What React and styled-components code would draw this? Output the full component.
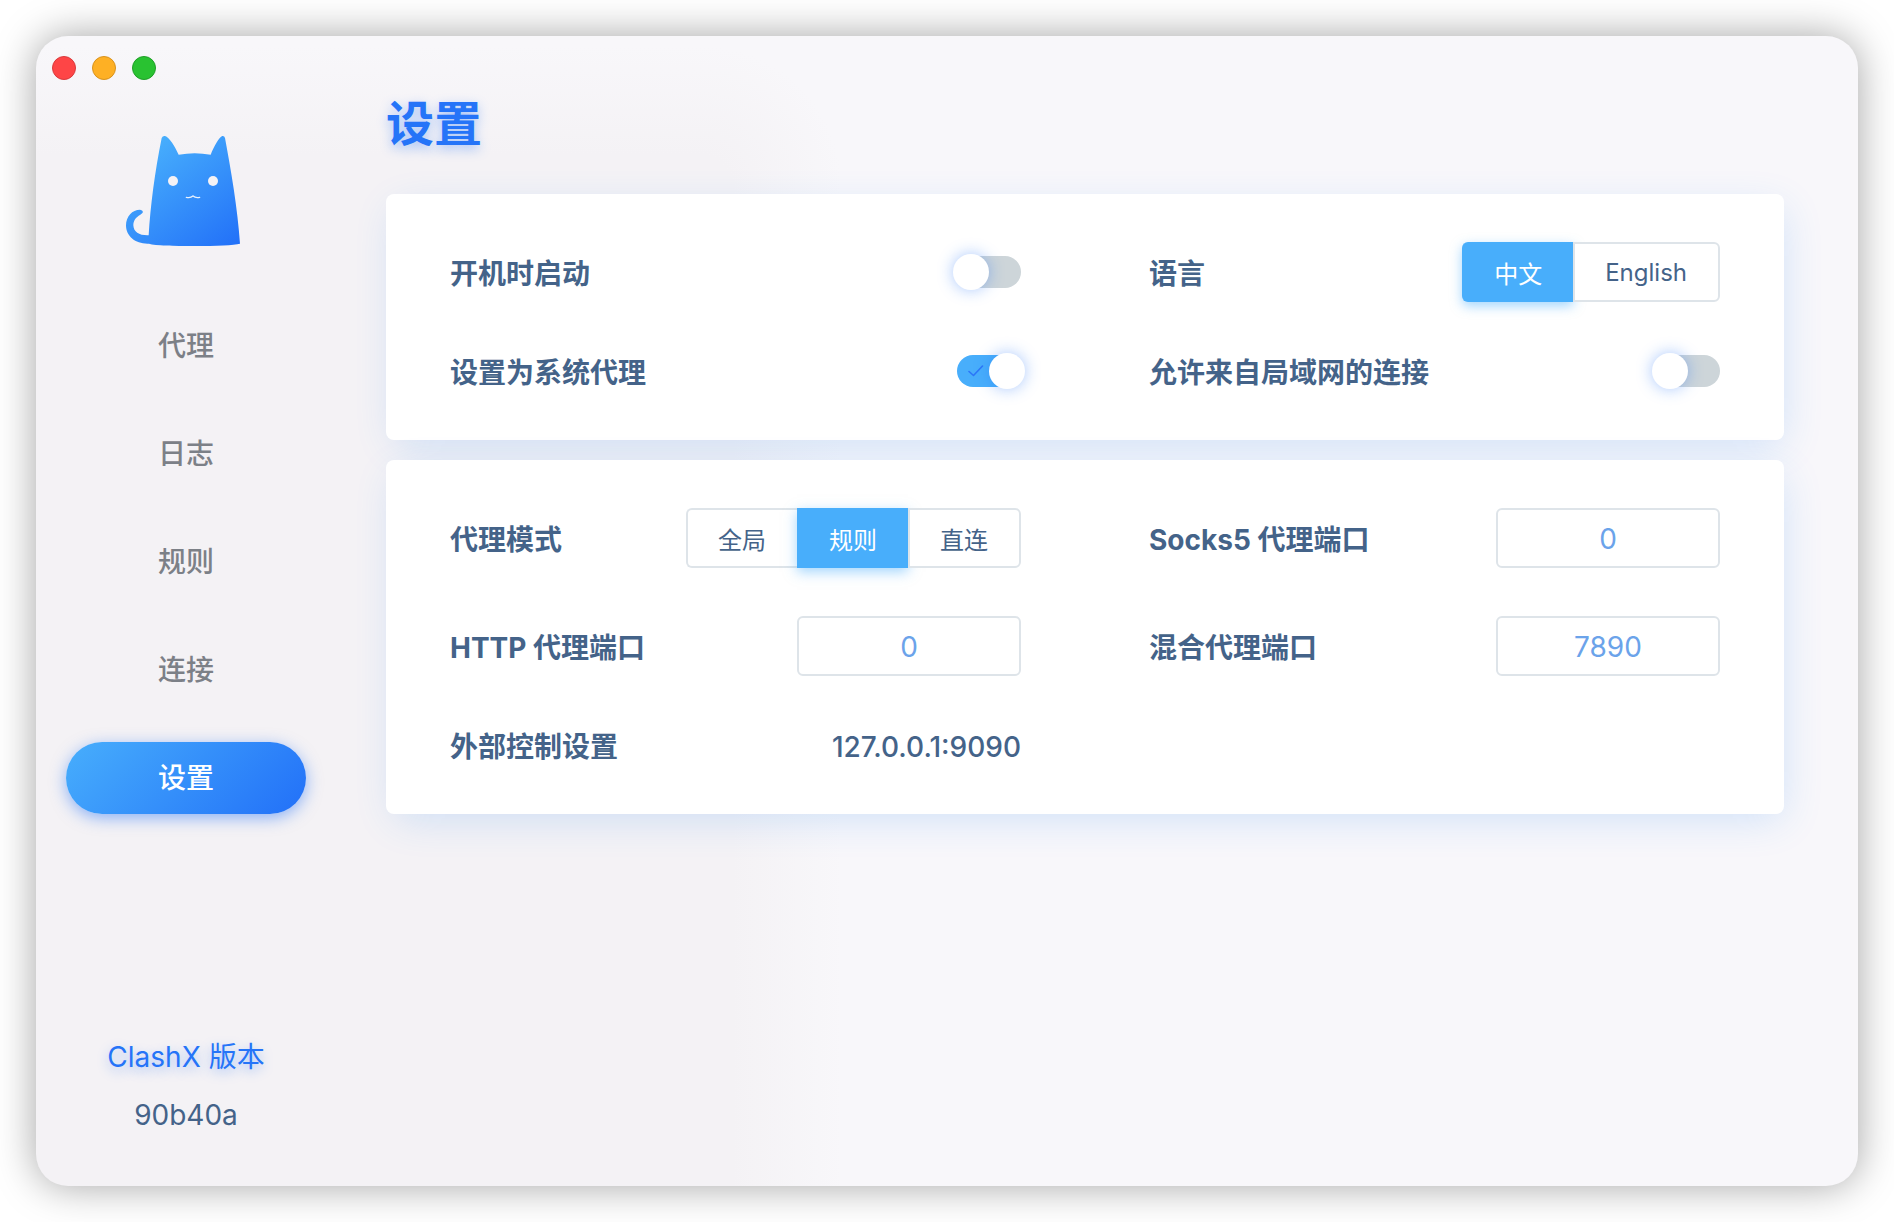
import { useState } from "react"
import styled, { createGlobalStyle } from "styled-components"

const navItems = ["代理", "日志", "规则", "连接", "设置"]

export default function App() {
    const [page, setPage] = useState("设置")
    const [language, setLanguage] = useState("中文")
    const [mode, setMode] = useState("规则")

    return (
        <>
            <GlobalStyle />
            <Window>
                <Sidebar>
                    <WindowControls>
                        <ControlDot aria-label="关闭" $color="#fe4546" $edge="#d93a3c" />
                        <ControlDot aria-label="最小化" $color="#feb024" $edge="#d8921d" />
                        <ControlDot aria-label="缩放" $color="#29c231" $edge="#1f9f27" />
                    </WindowControls>
                    <Logo />
                    <Nav>
                        {navItems.map((item) => (
                            <NavLink
                                key={item}
                                href="#"
                                $active={item === page}
                                onClick={(e) => {
                                    e.preventDefault()
                                    setPage(item)
                                }}
                            >
                                {item}
                            </NavLink>
                        ))}
                    </Nav>
                    <Version>
                        <VersionTitle>ClashX 版本</VersionTitle>
                        <VersionNumber>90b40a</VersionNumber>
                    </Version>
                </Sidebar>

                <Main>
                    <Title>设置</Title>
                    <Cards>
                        <Card>
                            <Row>
                                <Label htmlFor="startup">开机时启动</Label>
                                <Switch id="startup" />
                            </Row>
                            <Row>
                                <Label as="span">语言</Label>
                                <ButtonSelect options={["中文", "English"]} value={language} onSelect={setLanguage} />
                            </Row>
                            <Row>
                                <Label htmlFor="system-proxy">设置为系统代理</Label>
                                <Switch id="system-proxy" defaultChecked />
                            </Row>
                            <Row>
                                <Label htmlFor="allow-lan">允许来自局域网的连接</Label>
                                <Switch id="allow-lan" />
                            </Row>
                        </Card>

                        <Card>
                            <Row>
                                <Label as="span">代理模式</Label>
                                <ButtonSelect options={["全局", "规则", "直连"]} value={mode} onSelect={setMode} />
                            </Row>
                            <Row>
                                <Label htmlFor="socks-port">Socks5 代理端口</Label>
                                <Input id="socks-port" type="text" defaultValue="0" />
                            </Row>
                            <Row>
                                <Label htmlFor="http-port">HTTP 代理端口</Label>
                                <Input id="http-port" type="text" defaultValue="0" />
                            </Row>
                            <Row>
                                <Label htmlFor="mixed-port">混合代理端口</Label>
                                <Input id="mixed-port" type="text" defaultValue="7890" />
                            </Row>
                            <Row>
                                <Label as="span">外部控制设置</Label>
                                <Value>127.0.0.1:9090</Value>
                            </Row>
                        </Card>
                    </Cards>
                </Main>
            </Window>
        </>
    )
}

function Logo() {
    return (
        <LogoSvg viewBox="48 45 360 333" role="img" aria-label="ClashX">
            <defs>
                <linearGradient id="cat" gradientUnits="userSpaceOnUse" x1="130" y1="70" x2="370" y2="390">
                    <stop offset="0" stopColor="#47aefc" />
                    <stop offset="1" stopColor="#2270f8" />
                </linearGradient>
            </defs>
            <path
                fill="url(#cat)"
                d="M155 54 Q158 47 165 48 C178 52 194 78 206 104 Q254 95 302 104 C312 79 327 52 337 48 Q343 47 345 54 C363 151 383 266 390 371 C372 376 320 378 252 378 C190 378 136 377 117 371 C78 373 48 350 48 316 C48 289 67 269 90 269 Q98 270 99 276 Q98 280 91 284 C77 292 70 302 70 316 C71 337 88 347 116 346 C121 259 134 158 155 54 Z"
            />
            <circle cx="189" cy="183" r="15" fill="#f4f2f5" />
            <circle cx="309" cy="183" r="15" fill="#f4f2f5" />
            <path d="M229 232 Q241 235 249 228 Q257 235 269 232" fill="none" stroke="#e8f1fd" strokeWidth="4" strokeLinecap="round" />
        </LogoSvg>
    )
}

function Switch({ id, defaultChecked = false }) {
    const [checked, setChecked] = useState(defaultChecked)

    return (
        <SwitchBox>
            <SwitchInput id={id} type="checkbox" checked={checked} onChange={(e) => setChecked(e.target.checked)} />
            {checked && (
                <CheckMark viewBox="0 0 16 12" aria-hidden="true">
                    <path d="M1 6.5 L5.5 10.5 L14.5 1" fill="none" stroke="#2b76f8" strokeWidth="1.6" strokeLinecap="round" strokeLinejoin="round" />
                </CheckMark>
            )}
        </SwitchBox>
    )
}

function ButtonSelect({ options, value, onSelect }) {
    return (
        <ButtonGroup>
            {options.map((option) => (
                <GroupButton
                    key={option}
                    type="button"
                    aria-pressed={option === value}
                    $active={option === value}
                    onClick={() => onSelect(option)}
                >
                    {option}
                </GroupButton>
            ))}
        </ButtonGroup>
    )
}

const GlobalStyle = createGlobalStyle`
    * {
        box-sizing: border-box;
    }

    body {
        margin: 0;
        background: #fff;
        color: #446389;
        font-family: Inter, "Noto Sans CJK SC", sans-serif;
        font-size: 28px;
        line-height: 42px;
    }

    button,
    input {
        font-family: inherit;
    }
`

// the darker tint is a rounded area on the left that fades out at its top and right edges
const Window = styled.div`
    display: flex;
    min-height: calc(100vh - 72px);
    margin: 36px;
    border-radius: 32px;
    background:
        linear-gradient(0deg, #f4f2f5 30px, #f8f7fa 140px) 0 0 / 666px 150px no-repeat,
        radial-gradient(circle at 0 100%, #f4f2f5 30px, #f8f7fa 140px) 666px 0 / 150px 150px no-repeat,
        linear-gradient(90deg, #f4f2f5 30px, #f8f7fa 140px) 666px 150px / 150px 100% no-repeat,
        linear-gradient(#f4f2f5, #f4f2f5) 0 150px / 666px 100% no-repeat,
        #f8f7fa;
    box-shadow: 0 0 40px rgba(0, 0, 0, 0.36);
`

const Sidebar = styled.aside`
    display: flex;
    flex-direction: column;
    align-items: center;
    flex: 0 0 300px;
    padding: 20px 0 50px;
`

const WindowControls = styled.div`
    display: flex;
    align-self: flex-start;
    gap: 16px;
    padding-left: 16px;
`

const ControlDot = styled.button`
    width: 24px;
    height: 24px;
    padding: 0;
    border: 1px solid ${({ $edge }) => $edge};
    border-radius: 50%;
    background: ${({ $color }) => $color};
`

const LogoSvg = styled.svg`
    width: 120px;
    height: 111px;
    margin-top: 55px;
`

const Nav = styled.nav`
    display: flex;
    flex-direction: column;
    gap: 36px;
    margin-top: 64px;
`

const NavLink = styled.a`
    width: 240px;
    border-radius: 36px;
    color: ${({ $active }) => ($active ? "#fff" : "#7c8087")};
    background: ${({ $active }) => ($active ? "linear-gradient(135deg, #47aefc, #2270f8)" : "none")};
    box-shadow: ${({ $active }) => ($active ? "0 4px 16px rgba(34, 112, 248, 0.5)" : "none")};
    font-weight: 500;
    line-height: 72px;
    text-align: center;
    text-decoration: none;
`

const Version = styled.div`
    display: flex;
    flex-direction: column;
    gap: 16px;
    margin-top: auto;
    text-align: center;
`

const VersionTitle = styled.span`
    color: #2574f8;
    text-shadow: 0 4px 12px rgba(37, 116, 248, 0.4);
`

const VersionNumber = styled.span`
    color: #446389;
`

const Main = styled.main`
    flex: 1;
    min-width: 0;
    padding: 56px 74px 56px 50px;
`

const Title = styled.h1`
    margin: 0 0 38px;
    color: #2574f8;
    font-size: 48px;
    font-weight: 700;
    line-height: 64px;
    text-shadow: 0 4px 12px rgba(37, 116, 248, 0.4);
`

const Cards = styled.div`
    display: flex;
    flex-direction: column;
    gap: 20px;
`

const Card = styled.section`
    display: grid;
    grid-template-columns: 1fr 1fr;
    padding: 24px 0;
    border-radius: 8px;
    background: #fff;
    box-shadow: 4px 10px 40px -6px rgba(44, 138, 248, 0.2);
`

const Row = styled.div`
    display: flex;
    align-items: center;
    justify-content: space-between;
    padding: 24px 64px;
`

const Label = styled.label`
    padding-top: 4px;
    font-weight: 700;
    line-height: 38px;
`

const Value = styled.span`
    padding-top: 4px;
    font-weight: 500;
    line-height: 38px;
`

const Input = styled.input`
    width: 224px;
    height: 60px;
    padding: 2px 0 0;
    border: 2px solid #dee4e9;
    border-radius: 6px;
    outline: none;
    background: #fff;
    color: #6ba3ea;
    font-size: 28px;
    text-align: center;
`

const ButtonGroup = styled.div`
    display: flex;
`

const GroupButton = styled.button`
    height: 60px;
    padding: 0 31px 0 30px;
    border: 2px solid ${({ $active }) => ($active ? "#48aefb" : "#dee4e9")};
    border-right-width: 0;
    background: ${({ $active }) => ($active ? "#48aefb" : "#fff")};
    box-shadow: ${({ $active }) => ($active ? "0 4px 12px rgba(72, 174, 251, 0.5)" : "none")};
    color: ${({ $active }) => ($active ? "#fff" : "#446389")};
    font-size: 24px;
    cursor: pointer;

    &:first-child {
        border-radius: 6px 0 0 6px;
    }

    &:last-child {
        border-right-width: 2px;
        border-radius: 0 6px 6px 0;
    }
`

const SwitchBox = styled.span`
    display: flex;
    position: relative;
`

const SwitchInput = styled.input`
    appearance: none;
    display: flex;
    align-items: center;
    width: 64px;
    height: 32px;
    margin: 0;
    border-radius: 16px;
    background: #cdd5d9;
    cursor: pointer;

    &::before {
        content: "";
        flex: none;
        width: 36px;
        height: 36px;
        margin: 0 -4px;
        border-radius: 50%;
        background: #fff;
        box-shadow: 0 0 16px rgba(37, 116, 248, 0.4);
    }

    &:checked {
        justify-content: flex-end;
        background: #48aefb;
    }
`

const CheckMark = styled.svg`
    position: absolute;
    top: 10px;
    left: 11px;
    width: 16px;
    height: 12px;
    pointer-events: none;
`
